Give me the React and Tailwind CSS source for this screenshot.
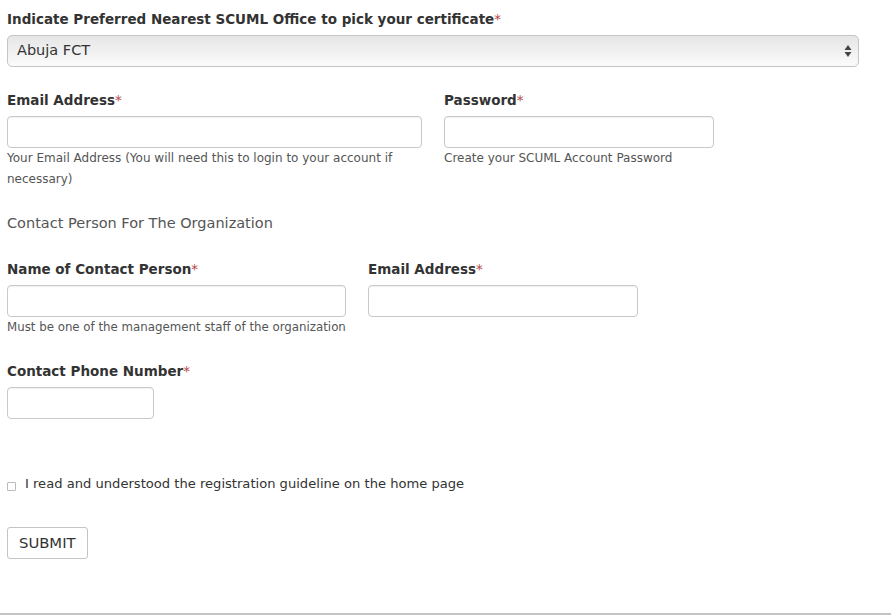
import React from "react";

const font = { fontFamily: '"DejaVu Sans", Verdana, sans-serif' };

function Label({ children }) {
  return (
    <div className="text-[13.5px] font-bold text-[#333] leading-[18px]">
      {children}
      <span className="text-[#b94a48] font-normal">*</span>
    </div>
  );
}

function Input({ w }) {
  return (
    <div
      className={`${w} h-[32px] rounded-[4px] border border-[#c9c9c9] bg-white shadow-[inset_0_1px_1px_rgba(0,0,0,0.06)]`}
    />
  );
}

export default function App() {
  return (
    <div
      className="w-[891px] h-[615px] bg-white relative overflow-hidden text-[#333]"
      style={font}
    >
      <div className="pl-[7px] pt-[10px] flex flex-col">
        <Label>Indicate Preferred Nearest SCUML Office to pick your certificate</Label>
        <div className="mt-[7px] w-[852px] h-[32px] rounded-[5px] border border-[#c4c4c4] bg-gradient-to-b from-[#e6e6e6] to-[#fbfbfb] flex items-center justify-between pl-[9px] pr-[6px]">
          <span className="text-[14.5px] text-[#333]">Abuja FCT</span>
          <svg width="8" height="14" viewBox="0 0 8 14">
            <path d="M4 1 L7.5 6 L0.5 6 Z" fill="#444" />
            <path d="M4 13 L7.5 8 L0.5 8 Z" fill="#444" />
          </svg>
        </div>

        <div className="mt-[24px] flex gap-[22px]">
          <div className="w-[415px] flex flex-col">
            <Label>Email Address</Label>
            <div className="mt-[7px]">
              <Input w="w-[415px]" />
            </div>
            <div className="mt-[0px] text-[12px] leading-[21px] text-[#555]">
              Your Email Address (You will need this to login to your account if necessary)
            </div>
          </div>
          <div className="w-[270px] flex flex-col">
            <Label>Password</Label>
            <div className="mt-[7px]">
              <Input w="w-[270px]" />
            </div>
            <div className="mt-[0px] text-[12px] leading-[21px] text-[#555]">
              Create your SCUML Account Password
            </div>
          </div>
        </div>

        <div className="mt-[23px] text-[14.5px] leading-[20px] text-[#555]">
          Contact Person For The Organization
        </div>

        <div className="mt-[27px] flex gap-[22px]">
          <div className="w-[339px] flex flex-col">
            <Label>Name of Contact Person</Label>
            <div className="mt-[7px]">
              <Input w="w-[339px]" />
            </div>
            <div className="mt-[2px] whitespace-nowrap text-[11.8px] leading-[16px] text-[#555]">
              Must be one of the management staff of the organization
            </div>
          </div>
          <div className="w-[269px] flex flex-col">
            <Label>Email Address</Label>
            <div className="mt-[7px]">
              <Input w="w-[270px]" />
            </div>
          </div>
        </div>

        <div className="mt-[27px] flex flex-col">
          <Label>Contact Phone Number</Label>
          <div className="mt-[7px]">
            <Input w="w-[147px]" />
          </div>
        </div>

        <div className="mt-[56px] flex items-center gap-[9px]">
          <div className="w-[9px] h-[9px] mt-[5px] border border-[#bbb] rounded-[1px] bg-white" />
          <span className="text-[13.1px] leading-[18px] text-[#333]">
            I read and understood the registration guideline on the home page
          </span>
        </div>

        <div className="mt-[34px]">
          <button className="h-[32px] px-[11px] rounded-[3px] border border-[#c4c4c4] bg-white text-[14.8px] text-[#333]">
            SUBMIT
          </button>
        </div>
      </div>
      <div className="absolute left-0 right-0 bottom-0 h-[2px] bg-[#c4c4c4]" />
    </div>
  );
}
